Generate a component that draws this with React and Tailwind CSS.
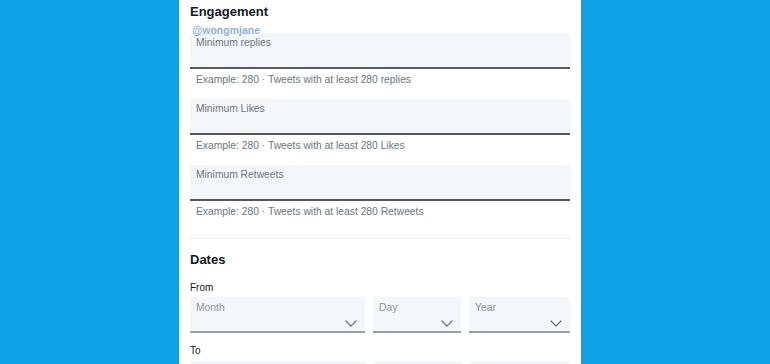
import React from 'react';

// Text field with a grey fill and a dark underline
function Field({ label, hint }) {
    return (
        <div>
            <div className="h-[36px] bg-[#f4f7f9] border-b-2 border-[#53585e] pl-[6px] pt-[3px]">
                <p className="text-[10.3px] leading-[13px] text-[#6b7580]">{label}</p>
            </div>
            <p className="mt-[4px] pl-[6px] text-[10.3px] leading-[13px] text-[#6b7580]">{hint}</p>
        </div>
    );
}

// Dropdown-looking box used for the date pickers
function Select({ label, className }) {
    return (
        <div className={`h-[36px] bg-[#f4f7f9] border-b-2 border-[#9aa1a7] flex flex-col pl-[6px] pr-[8px] pt-[4px] ${className}`}>
            <span className="text-[10.3px] leading-[13px] text-[#8a949d]">{label}</span>
            <svg className="self-end mt-[6px]" width="12" height="7" viewBox="0 0 12 7" fill="none">
                <path d="M1 1l5 5 5-5" stroke="#6b7580" strokeWidth="1.3" strokeLinecap="round" strokeLinejoin="round" />
            </svg>
        </div>
    );
}

function DateRow() {
    return (
        <div className="flex gap-[8px]">
            <Select label="Month" className="w-[175px]" />
            <Select label="Day" className="w-[88px]" />
            <Select label="Year" className="flex-1" />
        </div>
    );
}

function App() {
    return (
        <div
            className="w-[770px] h-[364px] bg-[#0ea1e6] overflow-hidden pl-[179px]"
            style={{ fontFamily: '"Liberation Sans", Arial, sans-serif' }}
        >
            <div className="relative w-[402px] h-full bg-white px-[11px] pt-[4px]">
                <h2 className="text-[13px] leading-[16px] font-bold text-[#14171a]">Engagement</h2>

                {/* watermark handle sits over the first field */}
                <span className="absolute left-[13px] top-[24px] z-10 text-[10.5px] leading-[13px] font-bold text-[#8db1d9]">
                    @wongmjane
                </span>

                <div className="mt-[13px] flex flex-col gap-[13px]">
                    <Field label="Minimum replies" hint="Example: 280 · Tweets with at least 280 replies" />
                    <Field label="Minimum Likes" hint="Example: 280 · Tweets with at least 280 Likes" />
                    <Field label="Minimum Retweets" hint="Example: 280 · Tweets with at least 280 Retweets" />
                </div>

                <div className="mt-[20px] h-px bg-[#e6ecf0]" />

                <h2 className="mt-[13px] text-[13px] leading-[16px] font-bold text-[#14171a]">Dates</h2>

                <p className="mt-[13px] text-[10px] leading-[13px] text-[#14171a]">From</p>
                <div className="mt-[3px]">
                    <DateRow />
                </div>

                <p className="mt-[11px] text-[10px] leading-[13px] text-[#14171a]">To</p>
                <div className="mt-[4px]">
                    <DateRow />
                </div>
            </div>
        </div>
    );
}

export default App;
